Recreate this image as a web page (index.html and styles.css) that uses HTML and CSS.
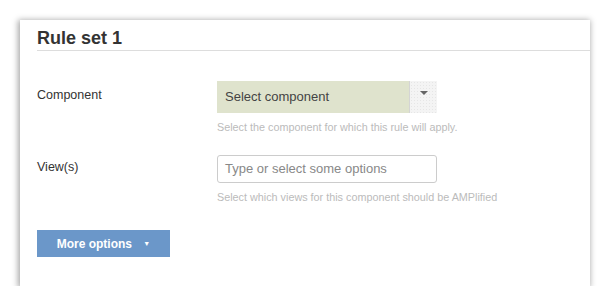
FILE: index.html
```html
<!DOCTYPE html>
<html>
<head>
<meta charset="utf-8">
<link rel="stylesheet" href="styles.css">
</head>
<body>
<div class="card">
  <h2 class="title">Rule set 1</h2>
  <div class="row row-first">
    <div class="label">Component</div>
    <div class="field">
      <div class="select">
        <div class="select-value">Select component</div>
        <div class="select-arrow"><span class="tri"></span></div>
      </div>
      <div class="help">Select the component for which this rule will apply.</div>
    </div>
  </div>
  <div class="row row-second">
    <div class="label">View(s)</div>
    <div class="field">
      <div class="input">Type or select some options</div>
      <div class="help">Select which views for this component should be AMPlified</div>
    </div>
  </div>
  <button class="btn">More options <span class="caret">▼</span></button>
</div>
</body>
</html>
```
FILE: styles.css
```css
html, body { margin: 0; padding: 0; background: #fff; }
body { font-family: "Liberation Sans", Arial, sans-serif; }
.card {
  box-sizing: border-box;
  margin: 20px 0 0 20px;
  width: 570px;
  height: 266px;
  background: #fff;
  box-shadow: -1px 1px 6px 1px rgba(0,0,0,0.35);
  padding: 8px 0 0 17px;
}
.title {
  margin: 0;
  font-size: 18px;
  font-weight: bold;
  color: #333;
  line-height: 21px;
  padding-bottom: 1px;
  border-bottom: 1px solid #ddd;
}
.row { display: flex; }
.row-first { margin-top: 30px; }
.row-second { margin-top: 22px; }
.label {
  width: 180px;
  font-size: 12.5px;
  color: #333;
  padding-top: 7px;
}
.row-second .label { padding-top: 5px; }
.field { display: flex; flex-direction: column; }
.select { display: flex; height: 32px; width: 220px; }
.select-value {
  flex: 1;
  background: #dfe3cd;
  color: #444;
  font-size: 13px;
  line-height: 32px;
  padding-left: 8px;
}
.select-arrow {
  width: 27px;
  border-left: 1px solid #d4d4d4;
  background-color: #f4f4f4;
  background-image: radial-gradient(#e6e6e6 0.5px, transparent 0.6px);
  background-size: 3px 3px;
  position: relative;
}
.tri {
  position: absolute;
  left: 10px;
  top: 10px;
  width: 0; height: 0;
  border-left: 4px solid transparent;
  border-right: 4px solid transparent;
  border-top: 4px solid #666;
}
.help {
  font-size: 10.8px;
  color: #bbb;
  margin-top: 8px;
}
.input {
  box-sizing: border-box;
  width: 220px;
  height: 28px;
  border: 1px solid #ccc;
  border-radius: 3px;
  font-size: 13px;
  color: #888;
  line-height: 26px;
  padding-left: 7px;
}
.btn {
  display: block;
  margin-top: 27px;
  width: 133px;
  height: 27px;
  border: 0;
  background: #6b97c9;
  color: #fff;
  font-family: "Liberation Sans", Arial, sans-serif;
  font-weight: bold;
  font-size: 12px;
  padding: 0 0 0 0;
  text-align: center;
}
.caret { font-size: 7px; margin-left: 8px; vertical-align: 2px; }
```
